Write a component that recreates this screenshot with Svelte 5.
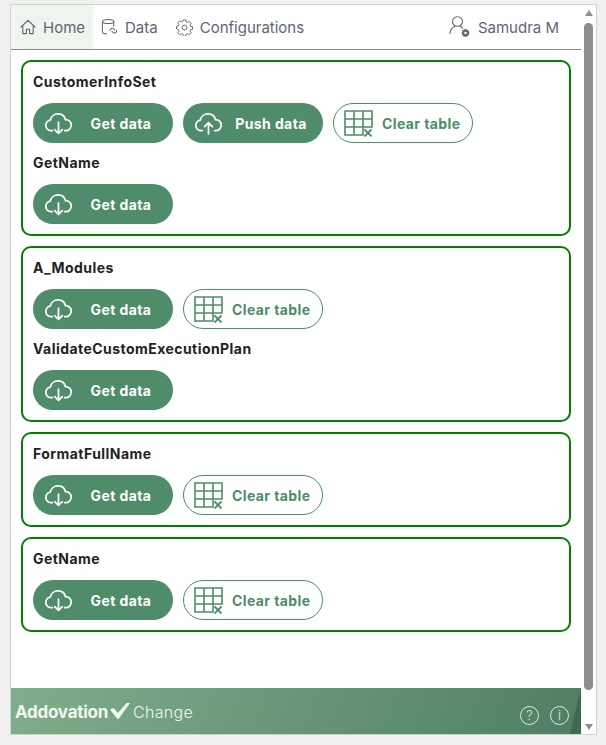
<script>
  const sections = [
    { items: [
      { name: "CustomerInfoSet", actions: ["get", "push", "clear"] },
      { name: "GetName", actions: ["get"] },
    ] },
    { items: [
      { name: "A_Modules", actions: ["get", "clear"] },
      { name: "ValidateCustomExecutionPlan", actions: ["get"] },
    ] },
    { items: [{ name: "FormatFullName", actions: ["get", "clear"] }] },
    { items: [{ name: "GetName", actions: ["get", "clear"] }] },
  ];
</script>

{#snippet cloud(up)}
  <svg class="cloud" viewBox="0 0 30 24" width="29" height="23" fill="none" stroke="#fff" stroke-width="1.8" stroke-linecap="round" stroke-linejoin="round">
    <path d="M8.5 19.5H7a5.6 5.6 0 0 1-.6-11.1A8.2 8.2 0 0 1 14.6 2a8 8 0 0 1 7.7 6 5.8 5.8 0 0 1 6 5.7 5.8 5.8 0 0 1-5.8 5.8h-1" />
    {#if up}
      <path d="M15 22.8V11.5M11 15.2l4-4 4 4" />
    {:else}
      <path d="M15 10.5v11.8M11 18.4l4 4 4-4" />
    {/if}
  </svg>
{/snippet}

<div class="window">
  <div class="main">
    <nav class="nav">
      <a class="tab active">
        <svg viewBox="0 0 16 16" width="16" height="16" fill="none" stroke="#5f6672" stroke-width="1.1" stroke-linejoin="round" stroke-linecap="round">
          <path d="M1 8 8 1.4 15 8M2.8 6.6v8h3.6v-4.4h3.2v4.4h3.6v-8" />
        </svg>
        Home
      </a>
      <a class="tab">
        <svg viewBox="0 0 18 18" width="17" height="18" fill="none" stroke="#5f6672" stroke-width="1.1" stroke-linecap="round">
          <ellipse cx="7.5" cy="3.2" rx="6" ry="2.2" />
          <path d="M1.5 3.2v11c0 1.2 2 2 4.6 2.2M13.5 3.2v5" />
          <path d="M9.5 12.5a2.3 2.3 0 0 1 4-1.4l1 1M16.5 12.5a2.3 2.3 0 0 1-4 2l-1-1" />
        </svg>
        Data
      </a>
      <a class="tab">
        <svg viewBox="0 0 18 18" width="17" height="17" fill="none" stroke="#5f6672" stroke-width="1">
          <circle cx="9" cy="9" r="2.6" />
          <path d="M7.6 1h2.8l.4 2.2 1.4.6 1.9-1.3 2 2-1.3 1.9.6 1.4 2.1.4v2.8l-2.1.4-.6 1.4 1.3 1.9-2 2-1.9-1.3-1.4.6-.4 2.2H7.6l-.4-2.2-1.4-.6-1.9 1.3-2-2 1.3-1.9-.6-1.4L.5 10.4V7.600l2.1-.4.6-1.4-1.3-1.9 2-2 1.9 1.3 1.4-.6z" stroke-linejoin="round" />
        </svg>
        Configurations
      </a>
      <div class="user">
        <svg viewBox="0 0 22 22" width="22" height="22" fill="none" stroke="#5f6672" stroke-width="1.1" stroke-linecap="round">
          <ellipse cx="8.5" cy="5.5" rx="5" ry="4.8" />
          <path d="M1 17.500c.4-3.600 2.600-6.400 5-7.300M11 10.200c1.100.4 2 1 2.700 1.900" />
          <circle cx="16.500" cy="17" r="2.800" stroke-width="2" stroke-dasharray="1.600 .8" />
          <circle cx="16.500" cy="17" r="1.800" />
        </svg>
        <span>Samudra M</span>
      </div>
    </nav>

    <div class="content">
      {#each sections as section}
        <section class="card">
          {#each section.items as item}
            <h3>{item.name}</h3>
            <div class="actions">
              {#each item.actions as action}
                {#if action === "clear"}
                  <button class="btn outline">
                    <svg class="table" viewBox="0 0 29 28" width="29" height="28" fill="none" stroke="#4e8c6a" stroke-width="1.6">
                      <path d="M1 2h27v16h-9v8H1zM1 10h27M1 18h18M10 2v24M19 2v16" />
                      <path d="M20.500 20.500l7 7M27.500 20.500l-7 7" stroke-width="1.800" />
                    </svg>
                    <span>Clear table</span>
                  </button>
                {:else}
                  <button class="btn solid">
                    {@render cloud(action === "push")}
                    <span>{action === "push" ? "Push data" : "Get data"}</span>
                  </button>
                {/if}
              {/each}
            </div>
          {/each}
        </section>
      {/each}
    </div>

    <footer class="footer">
      <div class="brand">
        <strong>Addovation</strong>
        <svg viewBox="0 0 20 16" width="20" height="16"><path d="M0 6.500 3.500 5l4.500 5L16.500 0H20L8.500 16h-1z" fill="#f1f7f1" /></svg>
        <span>Change</span>
      </div>
      <div class="help">
        <span class="round">?</span>
        <span class="round">i</span>
      </div>
    </footer>
  </div>

  <div class="scrollbar">
    <span class="arrow up"></span>
    <span class="thumb"></span>
    <span class="arrow down"></span>
  </div>
</div>

<style>
  :global(body) {
    background: #f0f0f0;
    font-family: Inter, "Open Sans", sans-serif;
  }

  .window {
    display: flex;
    box-sizing: border-box;
    width: 587px;
    height: 731px;
    margin: 4px 0 0 10px;
    background: #fff;
    border: 1px solid #d2d2d2;
  }

  .main {
    flex: 1;
    display: flex;
    flex-direction: column;
    min-width: 0;
  }

  .nav {
    display: flex;
    align-items: stretch;
    height: 45px;
    box-sizing: border-box;
    border-bottom: 1px solid #8a8a8a;
    color: #5f6672;
    font-size: 15px;
  }

  .tab {
    display: flex;
    align-items: center;
    gap: 7px;
    padding: 0 10px 0 8px;
  }

  .tab.active {
    padding: 0 8px 0 9px;
    background: #eef5ee;
  }

  .user {
    display: flex;
    align-items: center;
    gap: 7px;
    margin-left: auto;
    padding-right: 22px;
  }

  .content {
    flex: 1;
    display: flex;
    flex-direction: column;
    gap: 10px;
    padding: 10px 10px 0;
  }

  .card {
    box-sizing: border-box;
    padding: 10px;
    border: 2px solid #008000;
    border-radius: 10px;
  }

  h3 {
    margin: 0 0 11px;
    font-size: 14px;
    line-height: 20px;
    font-weight: 700;
    letter-spacing: 0.45px;
    color: #222;
  }

  .actions {
    display: flex;
    gap: 10px;
    margin-bottom: 10px;
  }

  .card .actions:last-child {
    margin-bottom: 0;
  }

  .btn {
    display: flex;
    align-items: center;
    box-sizing: border-box;
    width: 140px;
    height: 40px;
    padding: 0;
    border-radius: 20px;
    font: 700 14px Inter, "Open Sans", sans-serif;
    letter-spacing: 0.4px;
  }

  .solid {
    background: #4e8c6a;
    border: 0;
    color: #fff;
    padding-left: 11px;
  }

  .solid span {
    flex: 1;
    text-align: center;
    padding-right: 4px;
  }

  .outline {
    background: #fff;
    border: 1px solid #4e8c6a;
    color: #4e8c6a;
    gap: 9px;
    padding-left: 10px;
  }

  .footer {
    display: flex;
    align-items: center;
    justify-content: space-between;
    box-sizing: border-box;
    height: 46px;
    padding: 2px 12px 0 4px;
    color: #f1f7f1;
    background:
      linear-gradient(103.400deg, transparent 98%, #3f6a50 98.200%),
      linear-gradient(110deg, #7fae8c 0%, #4e7f62 100%);
  }

  .brand {
    display: flex;
    align-items: center;
    gap: 2px;
  }

  .brand svg {
    margin-top: -2px;
  }

  .brand strong {
    font-size: 17px;
    font-weight: 700;
    letter-spacing: -0.25px;
  }

  .brand span {
    font-size: 16px;
    font-weight: 300;
    letter-spacing: 0.3px;
    margin-left: 1px;
  }

  .help {
    display: flex;
    gap: 11px;
    padding-top: 6px;
  }

  .round {
    display: flex;
    align-items: center;
    justify-content: center;
    box-sizing: border-box;
    width: 19px;
    height: 19px;
    border: 1px solid #dfeae2;
    border-radius: 50%;
    font-size: 13px;
    font-weight: 300;
    color: #dfeae2;
  }

  .scrollbar {
    display: flex;
    flex-direction: column;
    align-items: center;
    width: 15px;
    padding-bottom: 4px;
  }

  .arrow {
    width: 0;
    height: 0;
    border-left: 4.500px solid transparent;
    border-right: 4.500px solid transparent;
  }

  .arrow.up {
    margin-top: 5px;
    border-bottom: 6px solid #8e8e8e;
  }

  .arrow.down {
    margin-top: auto;
    border-top: 6px solid #8e8e8e;
  }

  .thumb {
    width: 9px;
    height: 667px;
    margin-top: 7px;
    background: #8e8e8e;
    border-radius: 5px;
  }
</style>
